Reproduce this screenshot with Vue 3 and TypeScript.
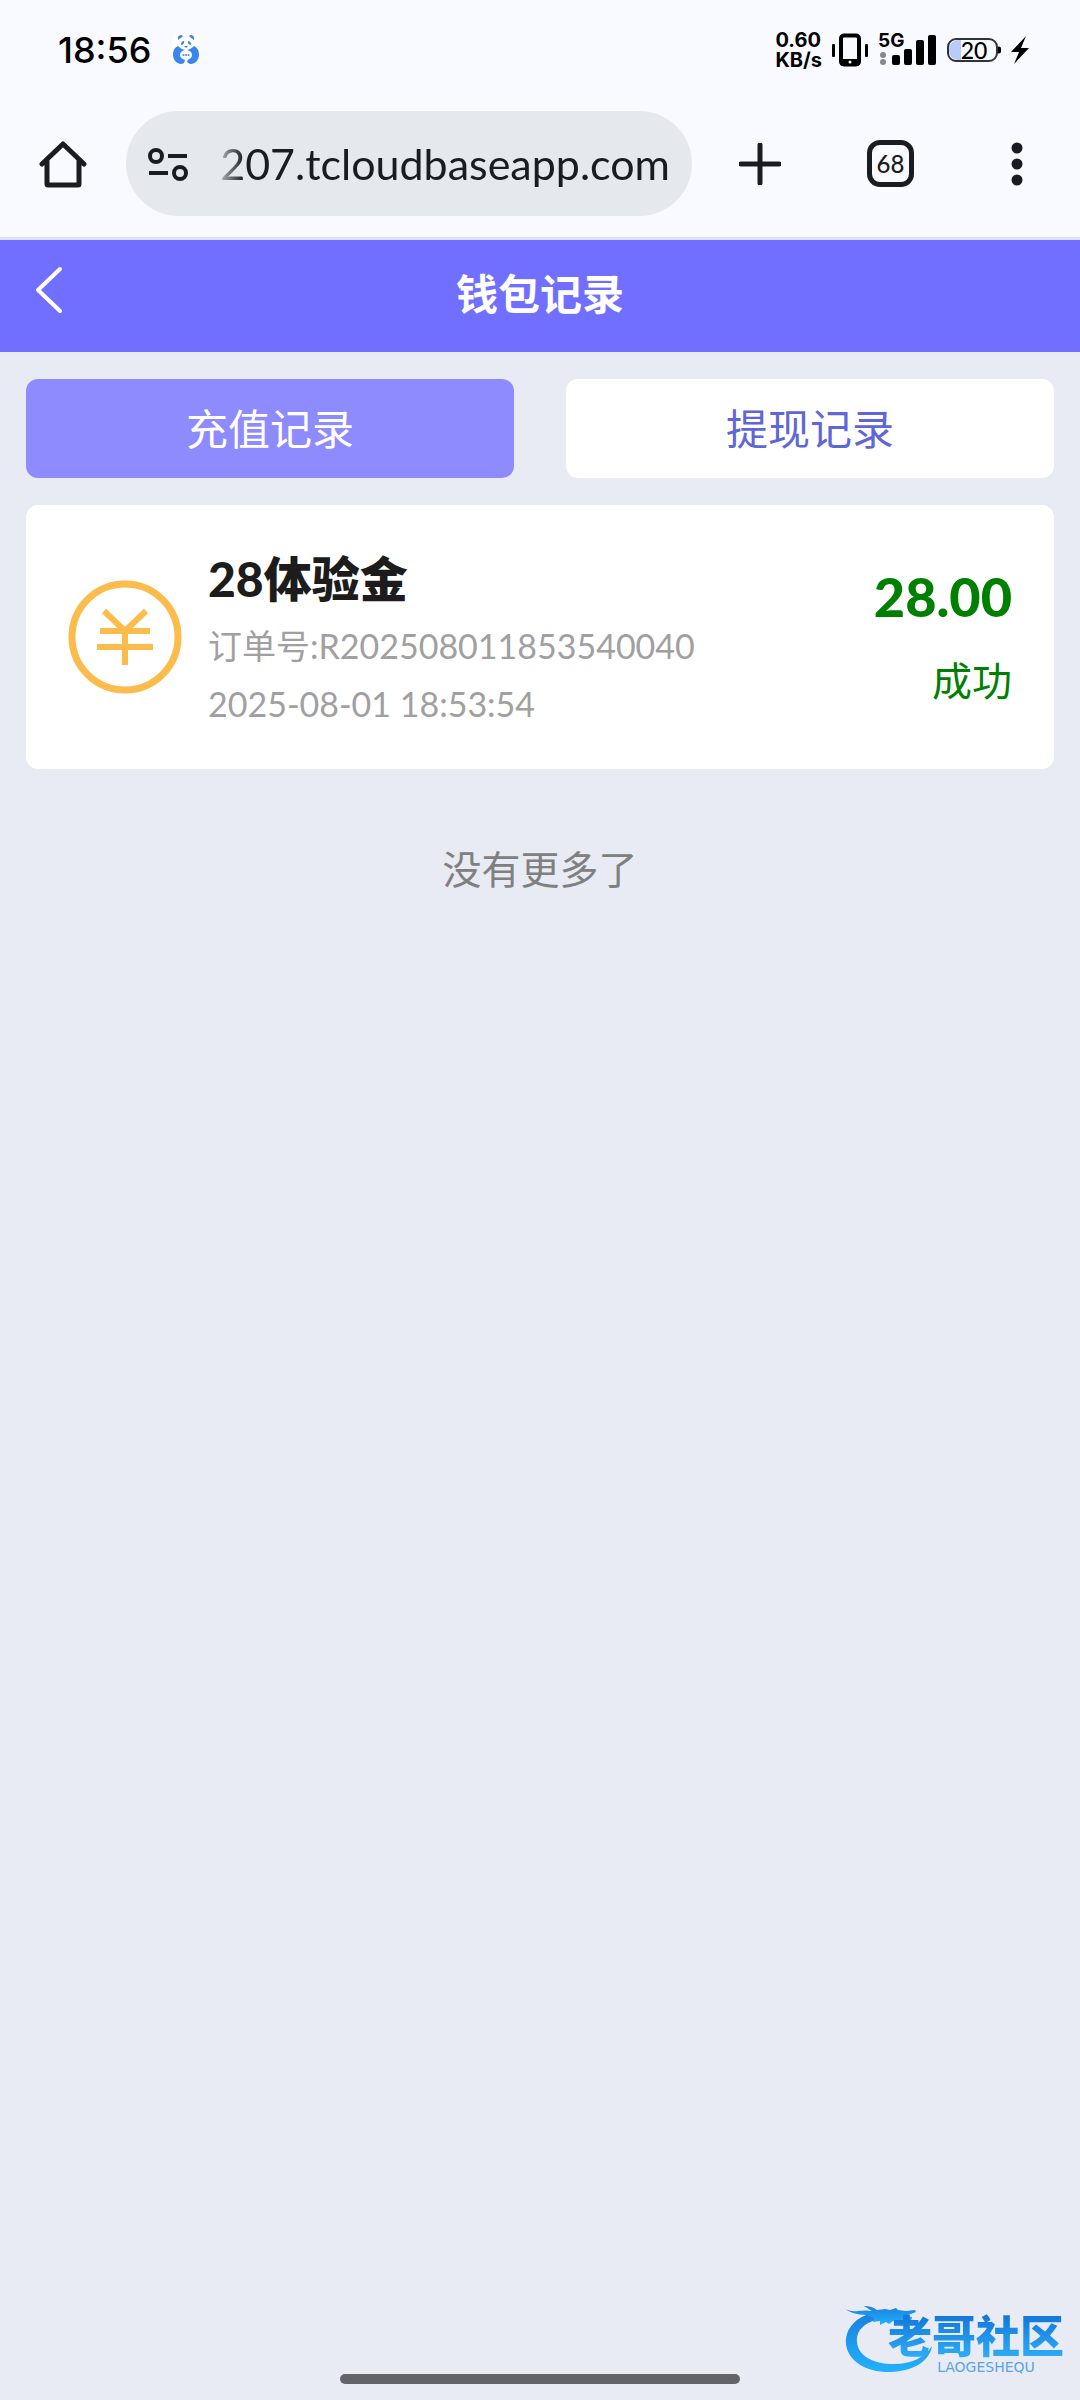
<script setup lang="ts">
import { ref } from 'vue'

interface WalletRecord {
  title: string
  orderNo: string
  time: string
  amount: string
  status: string
}

type TabKey = 'recharge' | 'withdraw'

const tabs: { key: TabKey; label: string }[] = [
  { key: 'recharge', label: '充值记录' },
  { key: 'withdraw', label: '提现记录' },
]
const activeTab = ref<TabKey>('recharge')

const address = ref('207.tcloudbaseapp.com')

const records: WalletRecord[] = [
  {
    title: '28体验金',
    orderNo: 'R202508011853540040',
    time: '2025-08-01 18:53:54',
    amount: '28.00',
    status: '成功',
  },
]
</script>

<template>
  <div class="screen">
    <div class="chrome">
      <div class="status-bar">
        <div class="status-left">
          <time class="clock">18:56</time>
          <svg class="panda" viewBox="0 0 30 32" aria-hidden="true">
            <rect x="1" y="0" width="28" height="30" rx="8" fill="#fff" />
            <path d="M7 5a3 3 0 0 1 5-3l-1 1-4 3zM23 5a3 3 0 0 0-5-3l1 1 4 3z" fill="#3f83dd" />
            <path d="M10 11q0-4 3-4 1 3-3 4zM20 11q0-4-3-4-1 3 3 4z" fill="#3f83dd" />
            <path d="M13 12h4l-2 2z" fill="#3f83dd" />
            <path d="M7 12q4 4 8 4t8-4c4 2 5 5 5 9 0 5-4 9-8 9-2 0-3-1-5-3-2 2-3 3-5 3-4 0-8-4-8-9 0-4 1-7 5-9z" fill="#3b86ee" />
            <ellipse cx="15" cy="21" rx="6" ry="5" fill="#fff" />
            <path d="M14 25h3l-2 6h-2z" fill="#fff" />
            <circle cx="12.500" cy="21" r="1" fill="#3b86ee" />
            <circle cx="15" cy="21" r="1" fill="#3b86ee" />
            <circle cx="17.500" cy="21" r="1" fill="#3b86ee" />
          </svg>
        </div>
        <div class="status-right">
          <div class="speed"><span>0.60</span><span>KB/s</span></div>
          <svg class="vibrate" viewBox="0 0 38 34" aria-hidden="true">
            <rect x="10" y="2.500" width="18" height="29" rx="3" fill="none" stroke="#000" stroke-width="4" />
            <path d="M9 26h20v4a3 3 0 0 1-3 3H12a3 3 0 0 1-3-3z" />
            <circle cx="19" cy="29" r="1.500" fill="#fff" />
            <rect x="1" y="11" width="3" height="13" rx="1" />
            <rect x="34" y="11" width="3" height="13" rx="1" />
          </svg>
          <div class="signal">
            <span class="network">5G</span>
            <svg viewBox="0 0 58 34" aria-hidden="true">
              <circle cx="5" cy="22" r="3" fill="#888" />
              <circle cx="5" cy="29" r="3" fill="#888" />
              <rect x="14" y="22" width="8" height="10" rx="2" />
              <rect x="26" y="16" width="8" height="16" rx="2" />
              <rect x="38" y="7" width="8" height="25" rx="2" />
              <rect x="50" y="2" width="8" height="30" rx="2" />
            </svg>
          </div>
          <div class="battery">
            <svg viewBox="0 0 54 24" aria-hidden="true">
              <path d="M11 2h3v20h-3a9 9 0 0 1-9-9v-2a9 9 0 0 1 9-9z" fill="#b9cbfb" />
              <rect x="1" y="1" width="49" height="22" rx="8" fill="none" stroke="#333" stroke-width="2" />
              <path d="M51 8.500a3.500 3.500 0 0 1 0 7z" />
            </svg>
            <span>20</span>
          </div>
          <svg class="bolt" viewBox="0 0 20 28" aria-hidden="true">
            <path d="M16 0 1 16h8L4 28l15-16h-8z" />
          </svg>
        </div>
      </div>

      <div class="toolbar">
        <button class="tool home" type="button" aria-label="主页">
          <svg viewBox="0 0 48 48" width="48" height="48" aria-hidden="true">
            <path d="M3 24 24 4l21 20M8 21v23q0 1 1 1h30q1 0 1-1V21" fill="none" stroke="#191c20" stroke-width="5" stroke-linecap="round" stroke-linejoin="round" />
          </svg>
        </button>
        <div class="omnibox">
          <svg viewBox="0 0 40 34" width="40" height="34" aria-hidden="true">
            <g fill="none" stroke="#191c20" stroke-width="4">
              <circle cx="8" cy="9" r="6" />
              <circle cx="32" cy="26" r="6" />
              <path d="M20 9h19M1 26h19" />
            </g>
          </svg>
          <input v-model="address" class="address" type="text" aria-label="网址" />
        </div>
        <button class="tool plus" type="button" aria-label="新标签页">
          <svg viewBox="0 0 42 42" width="42" height="42" aria-hidden="true">
            <path d="M21 2v38M2 21h38" stroke="#191c20" stroke-width="5" stroke-linecap="round" />
          </svg>
        </button>
        <button class="tool tab-count" type="button" aria-label="标签页"><span>68</span></button>
        <button class="tool more" type="button" aria-label="更多">
          <svg viewBox="0 0 12 44" width="12" height="44" aria-hidden="true">
            <g fill="#191c20"><circle cx="6" cy="6" r="5.500" /><circle cx="6" cy="22" r="5.500" /><circle cx="6" cy="38" r="5.500" /></g>
          </svg>
        </button>
      </div>
    </div>

    <header class="nav">
      <button class="back" type="button" aria-label="返回">
        <svg viewBox="0 0 28 48" width="28" height="48" aria-hidden="true">
          <path d="M25 3 3 24l22 21" fill="none" stroke="#fff" stroke-width="4" stroke-linecap="round" stroke-linejoin="round" />
        </svg>
      </button>
      <h1>钱包记录</h1>
    </header>

    <main>
      <div class="tabs">
        <button
          v-for="tab in tabs"
          :key="tab.key"
          type="button"
          class="tab"
          :class="{ active: tab.key === activeTab }"
          @click="activeTab = tab.key"
        >
          {{ tab.label }}
        </button>
      </div>

      <article v-for="record in records" :key="record.orderNo" class="card">
        <svg class="coin" viewBox="0 0 114 114" aria-hidden="true">
          <g fill="none" stroke="#fcbc4b">
            <circle cx="57" cy="57" r="53" stroke-width="7" />
            <path d="M36 31l21 20 21-20M32 51h50M29 67h56M57 50v35" stroke-width="6" />
          </g>
        </svg>
        <div class="info">
          <h2>{{ record.title }}</h2>
          <p>订单号:{{ record.orderNo }}</p>
          <p>{{ record.time }}</p>
        </div>
        <div class="result">
          <strong>{{ record.amount }}</strong>
          <span>{{ record.status }}</span>
        </div>
      </article>

      <p class="end">没有更多了</p>
    </main>

    <div class="watermark">
      <svg class="dragon" viewBox="0 0 90 70" aria-hidden="true">
        <defs>
          <linearGradient id="dragonFill" x1="0" y1="0" x2="0" y2="1">
            <stop offset="0" stop-color="#1a80e0" />
            <stop offset="1" stop-color="#22b2fb" />
          </linearGradient>
        </defs>
        <g fill="url(#dragonFill)">
          <path d="M28 9C10 14 1 26 2 40c2 18 22 29 45 28 22-1 38-10 41-26-7 11-20 18-38 18-21 0-36-8-37-22C12 26 21 18 36 15z" />
          <path d="M0 4q6 4 14 3t14 0l-8-5q8 0 13 4l8-1 5 1 6-2 2 2 8 1 9-1 1 2-8 3-5 1 9 1-1 4-10-1-8 1-4 3-3-2-6 3v-4l-7 1 1-4-8-3Q8 11 0 4z" />
        </g>
      </svg>
      <div class="brand">
        <span class="brand-name">老哥社区</span>
        <span class="brand-latin">LAOGESHEQU</span>
      </div>
    </div>
    <div class="gesture"></div>
  </div>
</template>

<style>
body {
  margin: 0;
  background: #e8ebf4;
}
</style>

<style scoped>
.screen {
  position: relative;
  min-height: 100vh;
  background: #e8ebf4;
  color: #1c1c1c;
  font-family: Lato, "Noto Sans CJK SC", sans-serif;
}

button {
  border: 0;
  padding: 0;
  background: none;
  font: inherit;
}

h1,
h2,
p {
  margin: 0;
}

svg {
  display: block;
}

.chrome {
  background: #f9faff;
  border-bottom: 3px solid #dedff8;
  padding-bottom: 21px;
  color: #000;
}

.status-bar {
  display: flex;
  justify-content: space-between;
  align-items: center;
  height: 99px;
  padding: 0 50px 0 58px;
  font-family: Inter, sans-serif;
}

.status-left,
.status-right {
  display: flex;
  align-items: center;
}

.status-left {
  gap: 20px;
}

.clock {
  font-size: 36px;
  font-weight: 500;
}

.panda {
  width: 30px;
  height: 32px;
}

.speed {
  display: flex;
  flex-direction: column;
  font-size: 20px;
  font-weight: 700;
  line-height: 20px;
}

.vibrate {
  width: 38px;
  height: 34px;
  margin-left: 9px;
}

.signal {
  position: relative;
  margin-left: 9px;
}

.signal svg {
  width: 58px;
  height: 34px;
}

.network {
  position: absolute;
  top: 0;
  left: 0;
  font-size: 19px;
  font-weight: 700;
  line-height: 16px;
}

.battery {
  position: relative;
  margin-left: 11px;
}

.battery svg {
  width: 54px;
  height: 24px;
}

.battery span {
  position: absolute;
  inset: 0;
  font-family: Lato, sans-serif;
  font-size: 23px;
  font-weight: 500;
  line-height: 24px;
  text-align: center;
}

.bolt {
  width: 20px;
  height: 28px;
  margin-left: 9px;
}

.toolbar {
  display: flex;
  align-items: center;
  margin-top: 12px;
  padding: 0 57px 0 39px;
}

.tool {
  display: flex;
  align-items: center;
  justify-content: center;
}

.omnibox {
  flex: 1;
  display: flex;
  align-items: center;
  min-width: 0;
  height: 105px;
  margin-left: 39px;
  padding: 0 22px;
  box-sizing: border-box;
  border-radius: 53px;
  background: #e5e8ec;
}

.address {
  flex: 1;
  min-width: 0;
  width: 0;
  margin-left: 24px;
  border: 0;
  padding: 0;
  outline: 0;
  background: none;
  color: #191c20;
  font-family: Lato, sans-serif;
  font-size: 43px;
  text-align: right;
  mask-image: linear-gradient(to right, transparent 0, #000 32px);
}

.plus {
  margin-left: 47px;
}

.tab-count {
  width: 47px;
  height: 47px;
  margin-left: 86px;
  box-sizing: border-box;
  border: 5px solid #191c20;
  border-radius: 13px;
  color: #191c20;
  font-size: 24px;
  font-weight: 500;
}

.more {
  margin-left: 97px;
}

.nav {
  display: grid;
  grid-template-columns: 1fr auto 1fr;
  align-items: center;
  height: 112px;
  padding: 0 35px;
  background: #706fff;
  color: #fff;
}

.back {
  justify-self: start;
  padding-bottom: 12px;
}

h1 {
  padding-bottom: 4px;
  font-size: 42px;
  font-weight: 700;
  line-height: 60px;
}

main {
  display: flex;
  flex-direction: column;
  gap: 27px;
  padding: 27px 26px;
}

.tabs {
  display: grid;
  grid-template-columns: 1fr 1fr;
  gap: 52px;
}

.tab {
  height: 99px;
  padding-bottom: 4px;
  border-radius: 12px;
  background: #fff;
  color: #5f66d8;
  font-size: 42px;
}

.tab.active {
  background: #8e8bfe;
  color: #fff;
}

.card {
  display: flex;
  align-items: center;
  padding: 36px 42px;
  border-radius: 12px;
  background: #fff;
}

.coin {
  flex: none;
  width: 114px;
  height: 114px;
}

.info {
  flex: 1;
  margin-left: 26px;
}

h2 {
  font-size: 48px;
  font-weight: 900;
  line-height: 76px;
}

.info p {
  color: #a0a0a0;
  font-size: 34px;
  line-height: 58px;
}

.result {
  display: flex;
  flex-direction: column;
  align-items: flex-end;
  gap: 12px;
  padding-top: 4px;
  color: #008000;
}

.result strong {
  font-size: 54px;
  font-weight: 900;
  line-height: 72px;
}

.result span {
  font-size: 40px;
  line-height: 72px;
}

.end {
  margin-top: 43px;
  color: #808080;
  font-size: 39px;
  line-height: 60px;
  text-align: center;
}

.watermark {
  position: absolute;
  right: 16px;
  bottom: 26px;
  display: flex;
}

.dragon {
  width: 90px;
  height: 70px;
}

.brand {
  display: flex;
  flex-direction: column;
  margin-left: -46px;
  padding-top: 9px;
}

.brand-name {
  background: linear-gradient(#1274d8, #2fb0f8);
  background-clip: text;
  color: transparent;
  font-size: 44px;
  font-weight: 900;
  line-height: 47px;
}

.brand-latin {
  align-self: center;
  padding-left: 20px;
  color: #5aa4e6;
  font-family: "DejaVu Sans", sans-serif;
  font-size: 14px;
  line-height: 14px;
}

.gesture {
  position: absolute;
  bottom: 16px;
  left: 50%;
  width: 400px;
  height: 10px;
  border-radius: 5px;
  background: #636467;
  transform: translateX(-50%);
}
</style>
